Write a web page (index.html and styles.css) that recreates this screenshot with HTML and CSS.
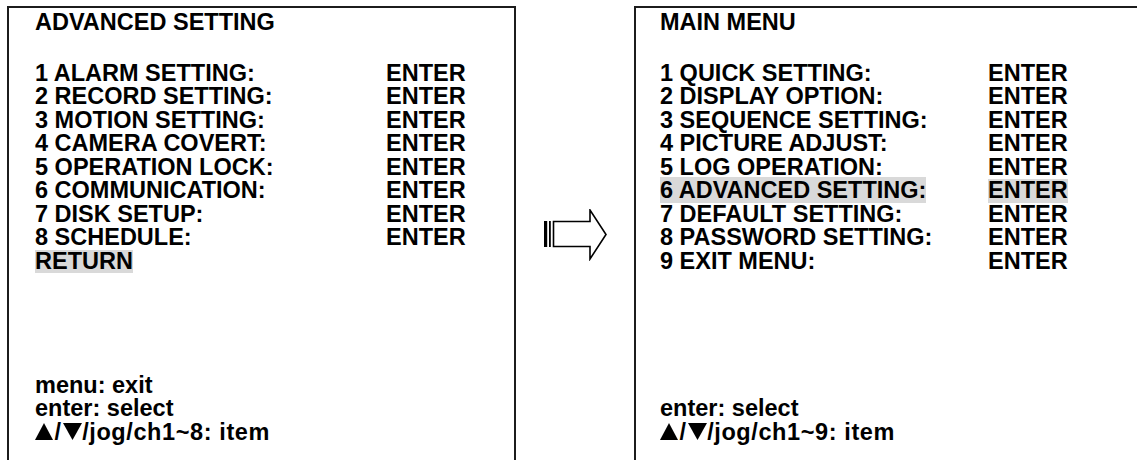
FILE: index.html
```html
<!DOCTYPE HTML>
<html lang="en-US">
<head>
  <meta http-equiv="Content-Type" content="text/html;charset=UTF-8">
  <title>Advanced setting / Main menu</title>
  <link rel="stylesheet" href="styles.css">
</head>
<body>
  <div class="screen">
    <section class="panel panel-left">
      <h2 class="title">ADVANCED SETTING</h2>
      <ul class="menu">
        <li><span class="label">1 ALARM SETTING:</span><span>ENTER</span></li>
        <li><span class="label">2 RECORD SETTING:</span><span>ENTER</span></li>
        <li><span class="label">3 MOTION SETTING:</span><span>ENTER</span></li>
        <li><span class="label">4 CAMERA COVERT:</span><span>ENTER</span></li>
        <li><span class="label">5 OPERATION LOCK:</span><span>ENTER</span></li>
        <li><span class="label">6 COMMUNICATION:</span><span>ENTER</span></li>
        <li><span class="label">7 DISK SETUP:</span><span>ENTER</span></li>
        <li><span class="label">8 SCHEDULE:</span><span>ENTER</span></li>
        <li><span class="sel">RETURN</span></li>
      </ul>
      <div class="keys">
        <p>menu: exit</p>
        <p>enter: select</p>
        <p class="nav"><svg class="tri" width="18" height="17" viewBox="0 0 18 17"><path d="M9 0 L18 17 H0 Z"/></svg><span class="slash">/</span><svg class="tri" width="19" height="17" viewBox="0 0 19 17"><path d="M0 0 H19 L9.5 17 Z"/></svg>/jog/ch1~8: item</p>
      </div>
    </section>

    <div class="gutter">
      <svg class="arrow" width="64" height="52" viewBox="0 0 64 52">
        <rect x="0" y="12" width="3.2" height="26" fill="#000"/>
        <rect x="5" y="12" width="1.8" height="26" fill="#000"/>
        <path d="M9.5 12.5 H46 V1 L62 25.5 L46 50 V37.5 H9.5 Z" fill="#fff" stroke="#000" stroke-width="1.6" stroke-linejoin="miter"/>
      </svg>
    </div>

    <section class="panel panel-right">
      <h2 class="title">MAIN MENU</h2>
      <ul class="menu">
        <li><span class="label">1 QUICK SETTING:</span><span>ENTER</span></li>
        <li><span class="label">2 DISPLAY OPTION:</span><span>ENTER</span></li>
        <li><span class="label">3 SEQUENCE SETTING:</span><span>ENTER</span></li>
        <li><span class="label">4 PICTURE ADJUST:</span><span>ENTER</span></li>
        <li><span class="label">5 LOG OPERATION:</span><span>ENTER</span></li>
        <li><span class="label"><span class="sel">6 ADVANCED SETTING:</span></span><span class="sel">ENTER</span></li>
        <li><span class="label">7 DEFAULT SETTING:</span><span>ENTER</span></li>
        <li><span class="label">8 PASSWORD SETTING:</span><span>ENTER</span></li>
        <li><span class="label">9 EXIT MENU:</span><span>ENTER</span></li>
      </ul>
      <div class="keys">
        <p>enter: select</p>
        <p class="nav"><svg class="tri" width="18" height="17" viewBox="0 0 18 17"><path d="M9 0 L18 17 H0 Z"/></svg><span class="slash">/</span><svg class="tri" width="19" height="17" viewBox="0 0 19 17"><path d="M0 0 H19 L9.5 17 Z"/></svg>/jog/ch1~9: item</p>
      </div>
    </section>
  </div>
</body>
</html>
```

FILE: styles.css
```css
body{
	padding: 0;
	margin: 0;
	background-color: #fff;
	overflow: hidden;
}
.screen{
	display: flex;
	align-items: flex-start;
	padding: 6px 0 0 7px;
	height: 454px;
	font-family: "Liberation Sans", Arial, sans-serif;
	font-weight: bold;
	font-size: 23.5px;
	line-height: 23.5px;
	color: #000;
}
.panel{
	box-sizing: border-box;
	flex: none;
	display: flex;
	flex-direction: column;
	height: 480px;
	padding-top: 3px;
	padding-bottom: 42px;
	border: 2px solid #1c1c1c;
	border-bottom: none;
}
.panel-left{
	width: 509px;
	padding-left: 26px;
	--col: 351px;
}
.panel-right{
	width: 540px;
	padding-left: 24px;
	--col: 328px;
}
.title{
	margin: 0;
	font-size: inherit;
}
.menu{
	list-style: none;
	margin: 27px 0 0 0;
	padding: 0;
}
.menu li{
	display: flex;
	white-space: nowrap;
}
.menu .label{
	flex: none;
	width: var(--col);
}
.sel{
	background-color: #d9d9d9;
}
.keys{
	margin-top: auto;
}
.keys p{
	margin: 0;
	white-space: nowrap;
}
.keys .nav{
	letter-spacing: 0.6px;
}
.slash{
	padding: 0 1.5px;
}
.tri{
	vertical-align: baseline;
	fill: #000;
}
.gutter{
	flex: none;
	width: 118px;
}
.arrow{
	display: block;
	margin: 203px 0 0 28px;
}
```
